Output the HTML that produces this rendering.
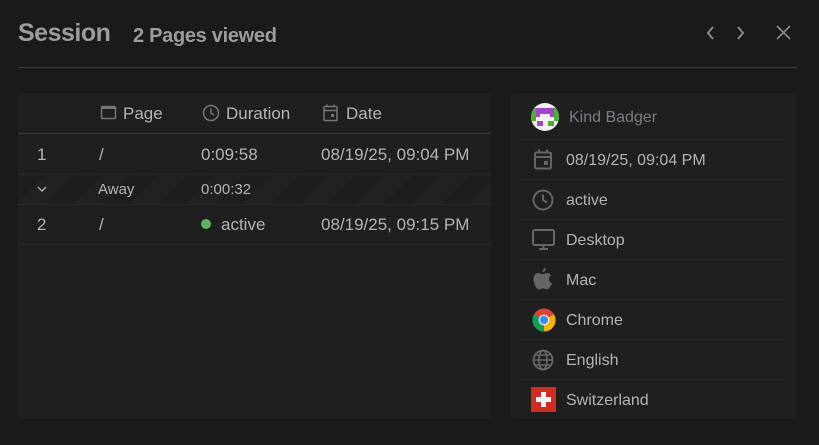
<!DOCTYPE html>
<html><head><meta charset="utf-8"><style>
*{box-sizing:border-box;margin:0;padding:0}
body{width:819px;height:445px;background:#1a1a1a;font-family:"Liberation Sans",sans-serif;color:#b4b4b4;position:relative;overflow:hidden}
.abs{position:absolute}
.t1{left:18px;top:19px;font-size:25px;font-weight:bold;color:#9c9c9c;letter-spacing:-0.5px}
.t2{left:133px;top:25px;font-size:20px;font-weight:bold;color:#9c9c9c;letter-spacing:-0.3px}
.hr{left:18px;top:67px;width:779px;height:1px;background:#3a3a3a}
.lp{left:18px;top:93px;width:473px;height:326px;background:#1f1f1f;border-radius:3px}
.rp{left:511px;top:93px;width:285px;height:326px;background:#1f1f1f;border-radius:3px}
.txt{font-size:17px;color:#b4b4b4;white-space:nowrap}
.line{height:1px;background:#2a2a33}
.sep{left:521px;width:265px;height:1px;background:#2b2b2b}
</style></head><body>
<div class="abs t1">Session</div>
<div class="abs t2">2 Pages viewed</div>
<svg class="abs" style="left:700px;top:22px" width="100" height="22" viewBox="0 0 100 22">
<path d="M13 5 L8 11 L13 17" stroke="#8a8a8a" stroke-width="2" fill="none"/>
<path d="M38 5 L43 11 L38 17" stroke="#8a8a8a" stroke-width="2" fill="none"/>
<path d="M77 4 L90 17 M90 4 L77 17" stroke="#8a8a8a" stroke-width="1.6" fill="none"/>
</svg>
<div class="abs hr"></div>

<div class="abs lp"></div>
<div class="abs" style="left:18px;top:174px;width:473px;height:30px;background:repeating-linear-gradient(135deg,#1e1e1e 0 20px,#212121 20px 40px)"></div>
<div class="abs line" style="left:18px;top:133px;width:473px;background:#3a3a3a"></div>
<div class="abs line" style="left:18px;top:174px;width:473px"></div>
<div class="abs line" style="left:18px;top:204px;width:473px"></div>
<div class="abs line" style="left:18px;top:244px;width:473px"></div>
<svg class="abs" style="left:100px;top:104px" width="18" height="18" viewBox="0 0 18 18"><rect x="1.5" y="2.5" width="14" height="12" rx="1" stroke="#777" stroke-width="1.5" fill="none"/><rect x="1.5" y="2.5" width="14" height="2.5" fill="#777"/></svg>
<div class="abs txt" style="left:123px;top:104px">Page</div>
<svg class="abs" style="left:202px;top:104px" width="18" height="18" viewBox="0 0 18 18"><circle cx="9" cy="9" r="7.5" stroke="#777" stroke-width="1.5" fill="none"/><path d="M9 4.5V9L12 11" stroke="#777" stroke-width="1.5" fill="none"/></svg>
<div class="abs txt" style="left:226px;top:104px">Duration</div>
<svg class="abs" style="left:322px;top:103px" width="18" height="20" viewBox="0 0 18 20"><rect x="2" y="3.5" width="13" height="14" rx="1" stroke="#777" stroke-width="1.5" fill="none"/><path d="M2 7.5H15M5 1.5V4M12 1.5V4" stroke="#777" stroke-width="1.5"/><rect x="9" y="11" width="3" height="3" fill="#777"/></svg>
<div class="abs txt" style="left:346px;top:104px">Date</div>

<div class="abs txt" style="left:37px;top:145px">1</div>
<div class="abs txt" style="left:99px;top:145px">/</div>
<div class="abs txt" style="left:201px;top:145px">0:09:58</div>
<div class="abs txt" style="left:321px;top:145px">08/19/25, 09:04 PM</div>
<svg class="abs" style="left:37px;top:185px" width="10" height="8"><path d="M1 2L5 6L9 2" stroke="#aaa" stroke-width="1.5" fill="none"/></svg>
<div class="abs txt" style="left:98px;top:181px;font-size:15px">Away</div>
<div class="abs txt" style="left:201px;top:181px;font-size:15px">0:00:32</div>
<div class="abs txt" style="left:37px;top:215px">2</div>
<div class="abs txt" style="left:99px;top:215px">/</div>
<div class="abs" style="left:201px;top:219px;width:10px;height:10px;border-radius:50%;background:#5cb85c"></div>
<div class="abs txt" style="left:221px;top:215px">active</div>
<div class="abs txt" style="left:321px;top:215px">08/19/25, 09:15 PM</div>

<div class="abs rp"></div>
<svg class="abs" style="left:531px;top:103px" width="28" height="28" viewBox="0 0 28 28"><defs><clipPath id="c"><circle cx="14" cy="14" r="14"/></clipPath></defs><g clip-path="url(#c)"><rect width="28" height="28" fill="#f2f2f2"/><rect x="0" y="5" width="5" height="13" fill="#4caf32"/><rect x="23" y="5" width="5" height="13" fill="#4caf32"/><rect x="5" y="5" width="18" height="6" fill="#a443c9"/><rect x="5" y="11" width="4" height="3" fill="#a443c9"/><rect x="19" y="11" width="4" height="3" fill="#a443c9"/><rect x="6" y="18" width="6" height="5" fill="#a443c9"/><rect x="17" y="18" width="6" height="5" fill="#4caf32"/></g></svg>
<div class="abs txt" style="left:569px;top:109px;color:#7a7d88;font-size:16px">Kind Badger</div>
<div class="abs sep" style="top:139px"></div>
<div class="abs sep" style="top:179px"></div>
<div class="abs sep" style="top:219px"></div>
<div class="abs sep" style="top:259px"></div>
<div class="abs sep" style="top:299px"></div>
<div class="abs sep" style="top:339px"></div>
<div class="abs sep" style="top:379px"></div>

<svg class="abs" style="left:533px;top:149px" width="20" height="22" viewBox="0 0 20 22"><rect x="2" y="3.5" width="16" height="16" rx="1.5" stroke="#666" stroke-width="2" fill="none"/><path d="M2 8H18M6 0.5V4M14 0.5V4" stroke="#666" stroke-width="2"/><rect x="11" y="12" width="4" height="4" fill="#666"/></svg>
<div class="abs txt" style="left:566px;top:152px;font-size:16px">08/19/25, 09:04 PM</div>
<svg class="abs" style="left:532px;top:189px" width="22" height="22" viewBox="0 0 22 22"><circle cx="11" cy="11" r="9.5" stroke="#666" stroke-width="2" fill="none"/><path d="M11 5.5V11L15 13.5" stroke="#666" stroke-width="2" fill="none"/></svg>
<div class="abs txt" style="left:566px;top:192px;font-size:16px">active</div>
<svg class="abs" style="left:532px;top:229px" width="24" height="22" viewBox="0 0 24 22"><rect x="1" y="1" width="21" height="15" rx="1.5" stroke="#666" stroke-width="2" fill="none"/><path d="M11.5 16V19M7 20H16" stroke="#666" stroke-width="2"/></svg>
<div class="abs txt" style="left:566px;top:232px;font-size:16px">Desktop</div>
<svg class="abs" style="left:533px;top:267px" width="20" height="24" viewBox="0 0 20 24"><path d="M13 1C13 3 11.5 5 9.5 5C9.5 3 11 1.2 13 1Z" fill="#666"/><path d="M10 7C8 7 6.5 6 5 6C2.5 6 0.5 8.5 0.5 12C0.5 16.5 3.5 22.5 6 22.5C7.5 22.5 8 21.5 10 21.5C12 21.5 12.5 22.5 14 22.5C16 22.5 18 19 19 16.5C17 15.5 16 14 16 12C16 10 17 9 18 8C17 6.5 15.5 6 14 6C12.5 6 11.5 7 10 7Z" fill="#666"/></svg>
<div class="abs txt" style="left:566px;top:272px;font-size:16px">Mac</div>
<svg class="abs" style="left:532px;top:308px" width="24" height="24" viewBox="0 0 24 24"><circle cx="12" cy="12" r="11.5" fill="#db4437"/><path d="M12 12 L2.04 17.75 A11.5 11.5 0 0 0 12 23.5 Z" fill="#0f9d58"/><path d="M12 12 L1.9 17.6 A11.5 11.5 0 0 1 2 6.2 L12 12Z" fill="#0f9d58"/><path d="M12 12 L22 6.25 A11.5 11.5 0 0 1 12 23.5 Z" fill="#f4b400"/><circle cx="12" cy="12" r="5.3" fill="#fff"/><circle cx="12" cy="12" r="4.2" fill="#4285f4"/></svg>
<div class="abs txt" style="left:566px;top:312px;font-size:16px">Chrome</div>
<svg class="abs" style="left:532px;top:349px" width="22" height="22" viewBox="0 0 22 22"><circle cx="11" cy="11" r="9.5" stroke="#666" stroke-width="1.8" fill="none"/><ellipse cx="11" cy="11" rx="4" ry="9.5" stroke="#666" stroke-width="1.8" fill="none"/><path d="M1.5 11H20.5M3 6H19M3 16H19" stroke="#666" stroke-width="1.6"/></svg>
<div class="abs txt" style="left:566px;top:352px;font-size:16px">English</div>
<svg class="abs" style="left:531px;top:387px" width="25" height="25" viewBox="0 0 25 25"><rect width="25" height="25" fill="#d52b1e"/><rect x="10" y="5" width="5" height="15" fill="#fff"/><rect x="5" y="10" width="15" height="5" fill="#fff"/></svg>
<div class="abs txt" style="left:566px;top:392px;font-size:16px">Switzerland</div>
</body></html>
